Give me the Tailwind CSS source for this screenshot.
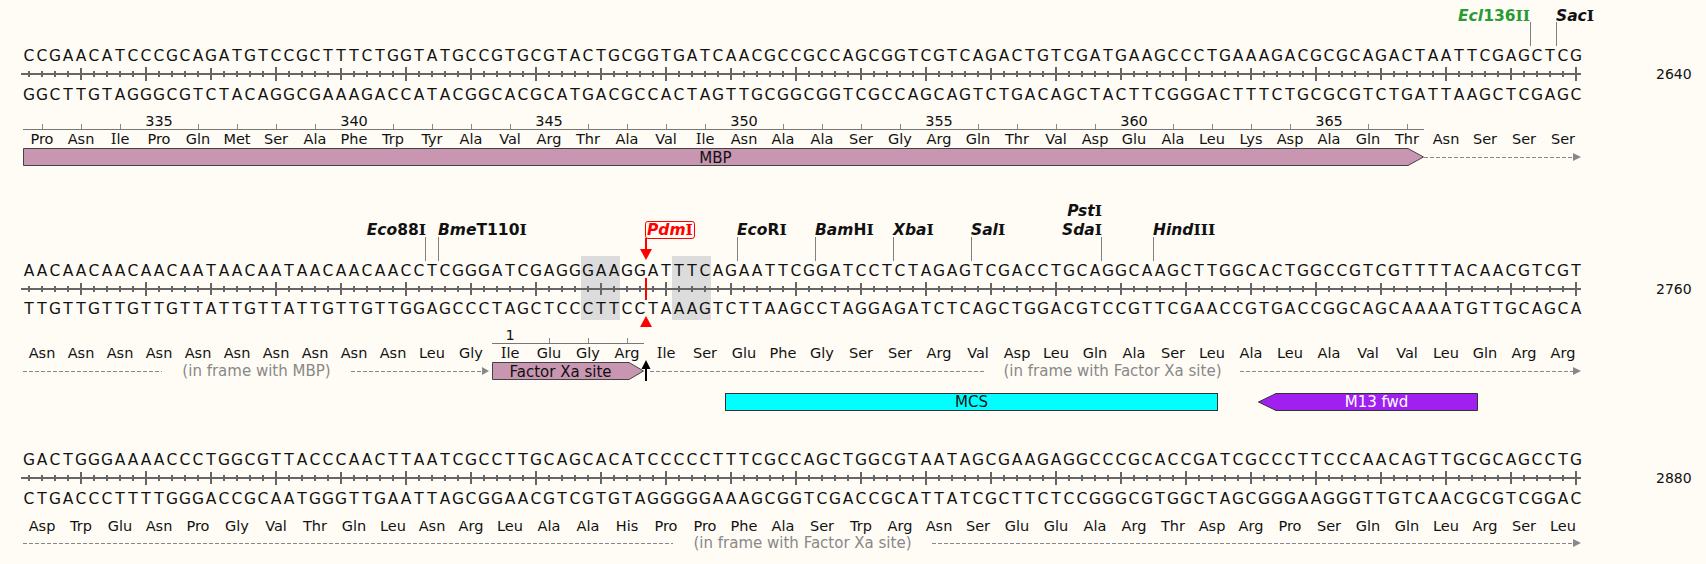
<!doctype html>
<html>
<head>
<meta charset="utf-8">
<script src="https://cdn.jsdelivr.net/npm/@tailwindcss/browser@4"></script>
</head>
<body class="m-0 bg-[#fffcf6]">
<main class="relative w-[1706px] h-[564px] overflow-hidden bg-[#fffcf6] text-[14.5px] leading-[18px] text-[#111] font-['DejaVu_Sans',sans-serif]">

  <!-- Block 1 -->
  <section class="relative pt-[46px]">
    <span class="absolute left-[1530px] top-[7px] -translate-x-full text-[15.5px] font-bold text-[#2a9a35]"><em>Ecl</em>136<span class="font-['DejaVu_Serif']">II</span></span>
    <span class="absolute left-[1556px] top-[7px] text-[15.5px] font-bold"><em>Sac</em><span class="font-['DejaVu_Serif']">I</span></span>
    <i class="absolute left-[1530px] top-[22px] w-px h-[24px] bg-[#808080]"></i>
    <i class="absolute left-[1556px] top-[22px] w-px h-[24px] bg-[#808080]"></i>

    <div data-seq class="grid grid-cols-[repeat(120,13px)] justify-items-center pl-[22.5px] h-[18px] text-[15.5px] leading-[20px]">CCGAACATCCCGCAGATGTCCGCTTTCTGGTATGCCGTGCGTACTGCGGTGATCAACGCCGCCAGCGGTCGTCAGACTGTCGATGAAGCCCTGAAAGACGCGCAGACTAATTCGAGCTCG</div>
    <div class="flex items-center pl-[21px] h-[20px]">
      <svg width="1560" height="20" class="block shrink-0">
        <defs>
          <pattern id="ticks" patternUnits="userSpaceOnUse" width="130" height="20" x="0">
            <g fill="#666">
              <rect x="7" y="7" width="2" height="6"/><rect x="20" y="7" width="2" height="6"/><rect x="33" y="7" width="2" height="6"/><rect x="46" y="7" width="2" height="6"/>
              <rect x="59" y="4" width="2" height="12"/>
              <rect x="72" y="7" width="2" height="6"/><rect x="85" y="7" width="2" height="6"/><rect x="98" y="7" width="2" height="6"/><rect x="111" y="7" width="2" height="6"/>
              <rect x="124" y="3" width="2" height="14"/>
            </g>
          </pattern>
        </defs>
        <rect x="0" y="9" width="1560" height="2" fill="#666"/>
        <rect x="0" y="0" width="1560" height="20" fill="url(#ticks)"/>
      </svg>
      <span class="ml-[75px] text-[14px]">2640</span>
    </div>
    <div data-seq class="grid grid-cols-[repeat(120,13px)] justify-items-center pl-[22.5px] h-[18px] mt-[2px] text-[15.5px]">GGCTTGTAGGGCGTCTACAGGCGAAAGACCATACGGCACGCATGACGCCACTAGTTGCGGCGGTCGCCAGCAGTCTGACAGCTACTTCGGGACTTTCTGCGCGTCTGATTAAGCTCGAGC</div>

    <div class="ml-[23px] w-[1401px] mt-[9px] h-[17px] border-b border-[#777] flex *:w-[39px] *:shrink-0 *:text-center *:h-[16px] *:leading-[16px] [&_i]:block [&_i]:w-px [&_i]:h-[5px] [&_i]:mx-auto [&_i]:mt-[11px] [&_i]:bg-[#888]">
      <span class="ml-[-0.5px]"><i></i></span><span><i></i></span><span><i></i></span><span>335</span><span><i></i></span><span><i></i></span><span><i></i></span><span><i></i></span><span>340</span><span><i></i></span><span><i></i></span><span><i></i></span><span><i></i></span><span>345</span><span><i></i></span><span><i></i></span><span><i></i></span><span><i></i></span><span>350</span><span><i></i></span><span><i></i></span><span><i></i></span><span><i></i></span><span>355</span><span><i></i></span><span><i></i></span><span><i></i></span><span><i></i></span><span>360</span><span><i></i></span><span><i></i></span><span><i></i></span><span><i></i></span><span>365</span><span><i></i></span><span><i></i></span>
    </div>
    <div class="flex pl-[22.5px] h-[18px] *:w-[39px] *:shrink-0 *:text-center">
      <span>Pro</span><span>Asn</span><span><span class="font-['DejaVu_Serif']">I</span>le</span><span>Pro</span><span>Gln</span><span>Met</span><span>Ser</span><span>Ala</span><span>Phe</span><span>Trp</span><span>Tyr</span><span>Ala</span><span>Val</span><span>Arg</span><span>Thr</span><span>Ala</span><span>Val</span><span><span class="font-['DejaVu_Serif']">I</span>le</span><span>Asn</span><span>Ala</span><span>Ala</span><span>Ser</span><span>Gly</span><span>Arg</span><span>Gln</span><span>Thr</span><span>Val</span><span>Asp</span><span>Glu</span><span>Ala</span><span>Leu</span><span>Lys</span><span>Asp</span><span>Ala</span><span>Gln</span><span>Thr</span><span>Asn</span><span>Ser</span><span>Ser</span><span>Ser</span>
    </div>
    <div class="flex items-center pl-[23px] h-[18px]">
      <div class="relative w-[1401px] h-[18px] flex items-center justify-center pr-[16px] pt-[1px] text-[15px]">
        <svg width="1401" height="18" class="absolute inset-0"><polygon points="0.5,0.5 1385,0.5 1400.5,9 1385,17.5 0.5,17.5" fill="#c896b0" stroke="#444"/></svg>
        <span class="relative">MBP</span>
      </div>
      <div class="w-[149px] h-px bg-[repeating-linear-gradient(90deg,#888_0_4px,transparent_4px_6px)]"></div>
      <svg width="8" height="8" class="block shrink-0"><polygon points="0,0 8,4 0,8" fill="#888"/></svg>
    </div>
  </section>

  <!-- Block 2 -->
  <section class="relative mt-[95px]">
    <i class="absolute left-[581px] top-[-5px] w-[39px] h-[64px] bg-[#dcdcdc]"></i>
    <i class="absolute left-[672px] top-[-5px] w-[39px] h-[64px] bg-[#dcdcdc]"></i>

    <span class="absolute left-[426px] top-[-40px] -translate-x-full text-[15.5px] font-bold"><em>Eco</em>88<span class="font-['DejaVu_Serif']">I</span></span>
    <span class="absolute left-[438px] top-[-40px] text-[15.5px] font-bold"><em>Bme</em>T110<span class="font-['DejaVu_Serif']">I</span></span>
    <span class="absolute left-[645px] top-[-40px] h-[18px] px-[1px] border border-[#ff0000] rounded-[3px] leading-[16px] text-[15.5px] font-bold text-[#ff0000] bg-[#fffcf6]"><em>Pdm</em><span class="font-['DejaVu_Serif']">I</span></span>
    <span class="absolute left-[737px] top-[-40px] text-[15.5px] font-bold"><em>Eco</em>R<span class="font-['DejaVu_Serif']">I</span></span>
    <span class="absolute left-[815px] top-[-40px] text-[15.5px] font-bold"><em>Bam</em>H<span class="font-['DejaVu_Serif']">I</span></span>
    <span class="absolute left-[893px] top-[-40px] text-[15.5px] font-bold"><em>Xba</em><span class="font-['DejaVu_Serif']">I</span></span>
    <span class="absolute left-[971px] top-[-40px] text-[15.5px] font-bold"><em>Sal</em><span class="font-['DejaVu_Serif']">I</span></span>
    <span class="absolute left-[1102px] top-[-40px] -translate-x-full text-[15.5px] font-bold"><em>Sda</em><span class="font-['DejaVu_Serif']">I</span></span>
    <span class="absolute left-[1102px] top-[-59px] -translate-x-full text-[15.5px] font-bold"><em>Pst</em><span class="font-['DejaVu_Serif']">I</span></span>
    <span class="absolute left-[1153px] top-[-40px] text-[15.5px] font-bold"><em>Hind</em><span class="font-['DejaVu_Serif']">III</span></span>
    <i class="absolute left-[425px] top-[-24px] w-px h-[24px] bg-[#808080]"></i>
    <i class="absolute left-[438px] top-[-24px] w-px h-[24px] bg-[#808080]"></i>
    <i class="absolute left-[737px] top-[-24px] w-px h-[24px] bg-[#808080]"></i>
    <i class="absolute left-[815px] top-[-24px] w-px h-[24px] bg-[#808080]"></i>
    <i class="absolute left-[893px] top-[-24px] w-px h-[24px] bg-[#808080]"></i>
    <i class="absolute left-[971px] top-[-24px] w-px h-[24px] bg-[#808080]"></i>
    <i class="absolute left-[1101px] top-[-24px] w-px h-[24px] bg-[#808080]"></i>
    <i class="absolute left-[1153px] top-[-24px] w-px h-[24px] bg-[#808080]"></i>

    <div data-seq class="relative grid grid-cols-[repeat(120,13px)] justify-items-center pl-[22.5px] h-[18px] text-[15.5px] leading-[20px]">AACAACAACAACAATAACAATAACAACAACCTCGGGATCGAGGGAAGGATTTCAGAATTCGGATCCTCTAGAGTCGACCTGCAGGCAAGCTTGGCACTGGCCGTCGTTTTACAACGTCGT</div>
    <div class="relative flex items-center pl-[21px] h-[20px]">
      <svg width="1560" height="20" class="block shrink-0">
        <rect x="0" y="9" width="1560" height="2" fill="#666"/>
        <rect x="0" y="0" width="1560" height="20" fill="url(#ticks)"/>
      </svg>
      <span class="ml-[75px] text-[14px]">2760</span>
    </div>
    <div data-seq class="relative grid grid-cols-[repeat(120,13px)] justify-items-center pl-[22.5px] h-[18px] mt-[1px] text-[15.5px]">TTGTTGTTGTTGTTATTGTTATTGTTGTTGGAGCCCTAGCTCCCTTCCTAAAGTCTTAAGCCTAGGAGATCTCAGCTGGACGTCCGTTCGAACCGTGACCGGCAGCAAAATGTTGCAGCA</div>

    <!-- cut site -->
    <svg width="14" height="110" class="absolute left-[639px] top-[-23px]">
      <rect x="6" y="0" width="2" height="14" fill="#f00"/>
      <polygon points="1,11 13,11 7,22" fill="#f00"/>
      <rect x="6" y="40" width="2" height="22" fill="#f00"/>
      <polygon points="1,89 13,89 7,78" fill="#f00"/>
    </svg>

    <div class="ml-[492px] w-[152px] mt-[9px] h-[17px] border-b border-[#777] flex *:w-[39px] *:shrink-0 *:text-center *:h-[16px] *:leading-[16px] [&_i]:block [&_i]:w-px [&_i]:h-[5px] [&_i]:mx-auto [&_i]:mt-[11px] [&_i]:bg-[#888]">
      <span class="ml-[-1.5px]">1</span><span><i></i></span><span><i></i></span><span><i></i></span>
    </div>
    <div class="flex pl-[22.5px] h-[18px] *:w-[39px] *:shrink-0 *:text-center">
      <span>Asn</span><span>Asn</span><span>Asn</span><span>Asn</span><span>Asn</span><span>Asn</span><span>Asn</span><span>Asn</span><span>Asn</span><span>Asn</span><span>Leu</span><span>Gly</span><span><span class="font-['DejaVu_Serif']">I</span>le</span><span>Glu</span><span>Gly</span><span>Arg</span><span><span class="font-['DejaVu_Serif']">I</span>le</span><span>Ser</span><span>Glu</span><span>Phe</span><span>Gly</span><span>Ser</span><span>Ser</span><span>Arg</span><span>Val</span><span>Asp</span><span>Leu</span><span>Gln</span><span>Ala</span><span>Ser</span><span>Leu</span><span>Ala</span><span>Leu</span><span>Ala</span><span>Val</span><span>Val</span><span>Leu</span><span>Gln</span><span>Arg</span><span>Arg</span>
    </div>
    <div class="relative flex items-center pl-[23px] h-[18px]">
      <div class="w-[139px] h-px shrink-0 bg-[repeating-linear-gradient(90deg,#888_0_4px,transparent_4px_6px)]"></div>
      <span class="w-[189px] shrink-0 text-center text-[#888] text-[15px]">(in frame with MBP)</span>
      <div class="w-[131px] h-px shrink-0 bg-[repeating-linear-gradient(90deg,#888_0_4px,transparent_4px_6px)]"></div>
      <svg width="7" height="8" class="block shrink-0"><polygon points="0,0 7,4 0,8" fill="#888"/></svg>
      <div class="relative ml-[3px] w-[152px] h-[18px] shrink-0 flex items-center justify-center pr-[15px] pt-[1px] text-[15px]">
        <svg width="152" height="18" class="absolute inset-0"><polygon points="0.5,0.5 137,0.5 151.5,9 137,17.5 0.5,17.5" fill="#c896b0" stroke="#444"/></svg>
        <span class="relative">Factor Xa site</span>
      </div>
      <div class="ml-[6px] w-[335px] h-px shrink-0 bg-[repeating-linear-gradient(90deg,#888_0_4px,transparent_4px_6px)]"></div>
      <span class="w-[255px] shrink-0 text-center text-[#888] text-[15px]">(in frame with Factor Xa site)</span>
      <div class="w-[333px] h-px shrink-0 bg-[repeating-linear-gradient(90deg,#888_0_4px,transparent_4px_6px)]"></div>
      <svg width="8" height="8" class="block shrink-0"><polygon points="0,0 8,4 0,8" fill="#888"/></svg>
      <svg width="10" height="22" class="absolute left-[641px] top-[-2px]"><rect x="4" y="6" width="2" height="15" fill="#000"/><polygon points="0.5,9 5,0 9.5,9" fill="#000"/></svg>
    </div>

    <div class="flex pl-[725px] mt-[13px] h-[18px] text-[15px]">
      <div class="relative w-[493px] h-[18px] shrink-0 flex items-center justify-center border border-[#333] bg-[#00ffff]">MCS</div>
      <div class="relative ml-[40px] w-[220px] h-[18px] shrink-0 flex items-center justify-center pl-[17px]">
        <svg width="220" height="18" class="absolute inset-0"><polygon points="0.5,9 18,0.5 219.5,0.5 219.5,17.5 18,17.5" fill="#a020f0" stroke="#333"/></svg>
        <span class="relative text-white">M13 fwd</span>
      </div>
    </div>
  </section>

  <!-- Block 3 -->
  <section class="mt-[39px]">
    <div data-seq class="grid grid-cols-[repeat(120,13px)] justify-items-center pl-[22.5px] h-[18px] text-[15.5px] leading-[20px]">GACTGGGAAAACCCTGGCGTTACCCAACTTAATCGCCTTGCAGCACATCCCCCTTTCGCCAGCTGGCGTAATAGCGAAGAGGCCCGCACCGATCGCCCTTCCCAACAGTTGCGCAGCCTG</div>
    <div class="flex items-center pl-[21px] h-[20px]">
      <svg width="1560" height="20" class="block shrink-0">
        <rect x="0" y="9" width="1560" height="2" fill="#666"/>
        <rect x="0" y="0" width="1560" height="20" fill="url(#ticks)"/>
      </svg>
      <span class="ml-[75px] text-[14px]">2880</span>
    </div>
    <div data-seq class="grid grid-cols-[repeat(120,13px)] justify-items-center pl-[22.5px] h-[18px] mt-[1px] text-[15.5px] leading-[20px]">CTGACCCTTTTGGGACCGCAATGGGTTGAATTAGCGGAACGTCGTGTAGGGGGAAAGCGGTCGACCGCATTATCGCTTCTCCGGGCGTGGCTAGCGGGAAGGGTTGTCAACGCGTCGGAC</div>
    <div class="flex pl-[22.5px] mt-[10px] h-[18px] *:w-[39px] *:shrink-0 *:text-center">
      <span>Asp</span><span>Trp</span><span>Glu</span><span>Asn</span><span>Pro</span><span>Gly</span><span>Val</span><span>Thr</span><span>Gln</span><span>Leu</span><span>Asn</span><span>Arg</span><span>Leu</span><span>Ala</span><span>Ala</span><span>His</span><span>Pro</span><span>Pro</span><span>Phe</span><span>Ala</span><span>Ser</span><span>Trp</span><span>Arg</span><span>Asn</span><span>Ser</span><span>Glu</span><span>Glu</span><span>Ala</span><span>Arg</span><span>Thr</span><span>Asp</span><span>Arg</span><span>Pro</span><span>Ser</span><span>Gln</span><span>Gln</span><span>Leu</span><span>Arg</span><span>Ser</span><span>Leu</span>
    </div>
    <div class="flex items-center pl-[23px] h-[16px]">
      <div class="w-[650px] h-px shrink-0 bg-[repeating-linear-gradient(90deg,#888_0_4px,transparent_4px_6px)]"></div>
      <span class="w-[259px] shrink-0 text-center text-[#888] text-[15px]">(in frame with Factor Xa site)</span>
      <div class="w-[641px] h-px shrink-0 bg-[repeating-linear-gradient(90deg,#888_0_4px,transparent_4px_6px)]"></div>
      <svg width="8" height="8" class="block shrink-0"><polygon points="0,0 8,4 0,8" fill="#888"/></svg>
    </div>
  </section>
</main>
<script>
document.querySelectorAll('[data-seq]').forEach(function (row) {
  var letters = row.textContent.trim().split('');
  row.textContent = '';
  letters.forEach(function (c) {
    var s = document.createElement('span');
    s.textContent = c;
    row.appendChild(s);
  });
});
</script>
</body>
</html>
